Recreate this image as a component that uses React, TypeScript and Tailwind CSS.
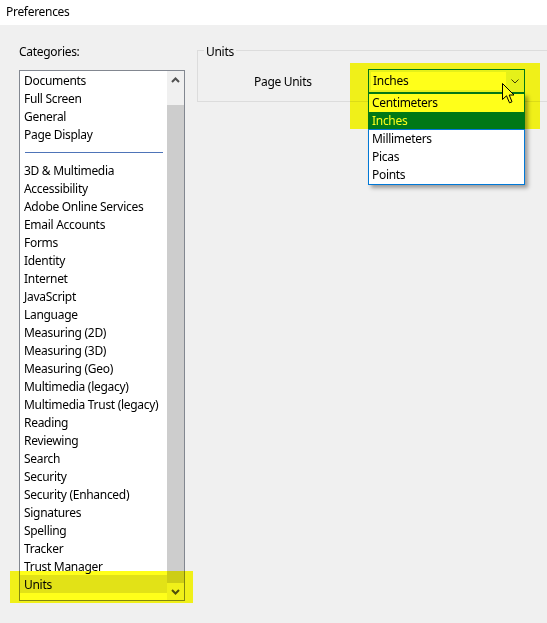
import React from 'react';

const topItems = ['Documents', 'Full Screen', 'General', 'Page Display'];

const items = [
  '3D & Multimedia',
  'Accessibility',
  'Adobe Online Services',
  'Email Accounts',
  'Forms',
  'Identity',
  'Internet',
  'JavaScript',
  'Language',
  'Measuring (2D)',
  'Measuring (3D)',
  'Measuring (Geo)',
  'Multimedia (legacy)',
  'Multimedia Trust (legacy)',
  'Reading',
  'Reviewing',
  'Search',
  'Security',
  'Security (Enhanced)',
  'Signatures',
  'Spelling',
  'Tracker',
  'Trust Manager',
  'Units',
];

const units = ['Centimeters', 'Inches', 'Millimeters', 'Picas', 'Points'];

const ScrollArrow = ({ up }: { up?: boolean }) => (
  <svg width="9" height="6" viewBox="0 0 9 6" className={up ? '' : 'rotate-180'}>
    <path d="M1 5 L4.5 1.5 L8 5" fill="none" stroke="#505050" strokeWidth="2" />
  </svg>
);

const Row = ({ label, selected }: { label: string; selected?: boolean }) => (
  <div className={`h-[18px] pt-[1px] pl-[4px] leading-[18px] whitespace-nowrap ${selected ? 'bg-[#e2e2e2]' : ''}`}>
    {label}
  </div>
);

export default function App() {
  return (
    <div className="relative h-[623px] w-[547px] overflow-hidden bg-[#f0f0f0] font-['Noto_Sans',sans-serif] text-[12px] tracking-[-0.3px] text-black">
      <div className="h-[25px] bg-white pt-[4px] pl-[6px] leading-[16px]">Preferences</div>

      <div className="flex">
        {/* categories */}
        <div className="w-[197px] shrink-0 pt-[19px] pl-[19px]">
          <div className="leading-[16px]">Categories:</div>
          <div className="mt-[10px] flex h-[531px] w-[166px] border border-[#828790] bg-white">
            <div className="flex flex-1 flex-col">
              {topItems.map((t) => (
                <Row key={t} label={t} />
              ))}
              <div className="flex h-[18px] items-center pr-[4px] pl-[5px]">
                <div className="h-px flex-1 bg-[#4e74b8]" />
              </div>
              {items.map((t) => (
                <Row key={t} label={t} selected={t === 'Units'} />
              ))}
            </div>
            <div className="flex w-[17px] flex-col bg-[#f0f0f0]">
              <div className="flex h-[17px] items-center justify-center">
                <ScrollArrow up />
              </div>
              <div className="flex flex-1 flex-col pt-[17px]">
                <div className="flex-1 bg-[#cdcdcd]" />
              </div>
              <div className="flex h-[17px] items-center justify-center">
                <ScrollArrow />
              </div>
            </div>
          </div>
        </div>

        {/* units panel */}
        <div className="pt-[25px]">
          <div className="relative flex w-[360px] items-center border border-[#dcdcdc] pt-[18px] pb-[8px]">
            <span className="absolute top-[-7px] left-[6px] bg-[#f0f0f0] px-[2px] leading-[16px]">Units</span>
            <div className="w-[170px] pt-[1px] pl-[56px] leading-[16px]">Page Units</div>
            <div className="relative flex h-[24px] w-[157px] border border-[#0078d7] bg-[#e5f1fb] py-[2px] pl-[2px]">
              <div className="flex-1 bg-white pl-[2px] leading-[18px]">Inches</div>
              <div className="flex w-[18px] items-center justify-center">
                <svg width="8" height="5" viewBox="0 0 8 5">
                  <path d="M0.5 0.5 L4 4 L7.5 0.5" fill="none" stroke="#404040" strokeWidth="1" />
                </svg>
              </div>
              <div className="absolute top-[23px] left-[-1px] w-[157px] border border-[#0078d7] bg-white shadow-[3px_3px_4px_rgba(0,0,0,0.35)]">
                {units.map((u) => (
                  <div
                    key={u}
                    className={`h-[18px] pl-[3px] leading-[18px] ${u === 'Inches' ? 'bg-[#0078d7] text-white' : ''}`}
                  >
                    {u}
                  </div>
                ))}
              </div>
            </div>
          </div>
        </div>
      </div>

      {/* mouse pointer */}
      <svg className="absolute top-[83px] left-[502px]" width="14" height="22" viewBox="0 0 14 22">
        <path d="M0.5 0.5 L0.5 16.5 L4.5 12.8 L7.5 19.8 L10 18.8 L7.2 12 L12 12 Z" fill="white" stroke="black" strokeWidth="1" />
      </svg>

      {/* annotation highlights */}
      <div className="pointer-events-none absolute top-[571px] left-[10px] h-[32px] w-[183px] bg-[#ffff1a] mix-blend-multiply" />
      <div className="pointer-events-none absolute top-[63px] left-[350px] h-[66px] w-[190px] bg-[#ffff1a] mix-blend-multiply" />
    </div>
  );
}
